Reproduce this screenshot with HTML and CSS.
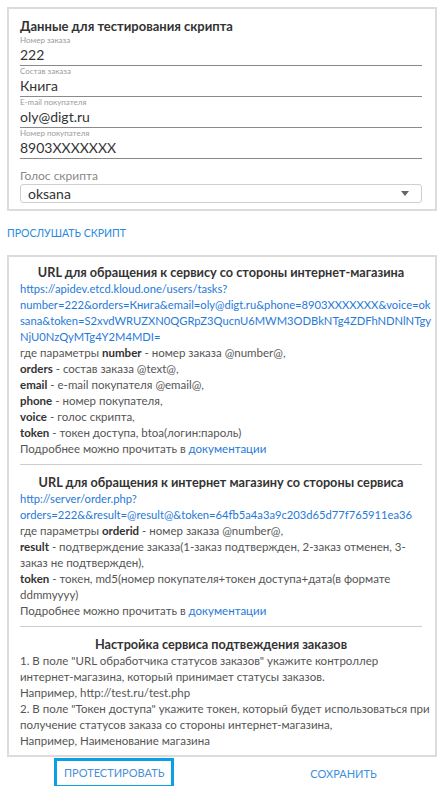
FILE: index.html
```html
<!DOCTYPE html>
<html lang="ru">
<head>
<meta charset="utf-8">
<link rel="stylesheet" href="styles.css">
</head>
<body>
<div class="page">
  <section class="card form-card">
    <h2 class="card-title">Данные для тестирования скрипта</h2>
    <div class="field">
      <label class="field-label">Номер заказа</label>
      <div class="field-value">222</div>
    </div>
    <div class="field">
      <label class="field-label">Состав заказа</label>
      <div class="field-value">Книга</div>
    </div>
    <div class="field">
      <label class="field-label">E-mail покупателя</label>
      <div class="field-value">oly@digt.ru</div>
    </div>
    <div class="field">
      <label class="field-label">Номер покупателя</label>
      <div class="field-value">8903XXXXXXX</div>
    </div>
    <div class="select-field">
      <label class="select-label">Голос скрипта</label>
      <div class="select-box">
        <span>oksana</span>
        <svg class="select-arrow" width="8" height="5" viewBox="0 0 8 5"><path d="M0 0h8L4 5z" fill="#666"/></svg>
      </div>
    </div>
  </section>

  <a class="text-button listen">ПРОСЛУШАТЬ СКРИПТ</a>

  <section class="card info-card">
    <div class="info-block">
      <h3 class="info-title">URL для обращения к сервису со стороны интернет-магазина</h3>
      <a class="link url">https://apidev.etcd.kloud.one/users/tasks?<br>number=222&amp;orders=Книга&amp;email=oly@digt.ru&amp;phone=8903XXXXXXX&amp;voice=ok<br>sana&amp;token=S2xvdWRUZXN0QGRpZ3QucnU6MWM3ODBkNTg4ZDFhNDNlNTgy<br>NjU0NzQyMTg4Y2M4MDI=</a>
      <p>где параметры <b>number</b> - номер заказа @number@,<br>
      <b>orders</b> - состав заказа @text@,<br>
      <b>email</b> - e-mail покупателя @email@,<br>
      <b>phone</b> - номер покупателя,<br>
      <b>voice</b> - голос скрипта,<br>
      <b>token</b> - токен доступа, btoa(логин:пароль)<br>
      Подробнее можно прочитать в <a class="link">документации</a></p>
    </div>
    <div class="info-block">
      <h3 class="info-title">URL для обращения к интернет магазину со стороны сервиса</h3>
      <a class="link url">http://server/order.php?<br>orders=222&amp;&amp;result=@result@&amp;token=64fb5a4a3a9c203d65d77f765911ea36</a>
      <p>где параметры <b>orderid</b> - номер заказа @number@,<br>
      <b>result</b> - подтверждение заказа(1-заказ подтвержден, 2-заказ отменен, 3-<br>заказ не подтвержден),<br>
      <b>token</b> - токен, md5(номер покупателя+токен доступа+дата(в формате<br>ddmmyyyy)<br>
      Подробнее можно прочитать в <a class="link">документации</a></p>
    </div>
    <div class="info-block">
      <h3 class="info-title">Настройка сервиса подтвеждения заказов</h3>
      <p>1. В поле "URL обработчика статусов заказов" укажите контроллер<br>интернет-магазина, который принимает статусы заказов.<br>
      Например, http://test.ru/test.php<br>
      2. В поле "Токен доступа" укажите токен, который будет использоваться при<br>получение статусов заказа со стороны интернет-магазина,<br>
      Например, Наименование магазина</p>
    </div>
  </section>

  <div class="actions">
    <a class="text-button test-btn">ПРОТЕСТИРОВАТЬ</a>
    <a class="text-button save-btn">СОХРАНИТЬ</a>
  </div>
</div>
</body>
</html>
```

FILE: styles.css
```css
* { box-sizing: border-box; }
html, body { margin: 0; padding: 0; background: #fff; }
body {
  font-family: Lato, "Noto Sans", sans-serif;
  color: #444;
  font-size: 11.5px;
}
.page { padding: 7px 10px 0 7px; }
.card { border: 2px solid #dcdcdc; }
.form-card { padding: 8px 13px 6px 11px; }
.card-title {
  margin: 0;
  font-size: 13px;
  font-weight: 700;
  color: #333;
  line-height: 18px;
}
.field { border-bottom: 1px solid #8a8a8a; }
.field-label {
  display: block;
  font-size: 8px;
  line-height: 10px;
  color: #9a9a9a;
}
.field-value {
  font-size: 14px;
  line-height: 20px;
  color: #333;
}
.select-field { margin-top: 9px; }
.select-label { display: block; font-size: 12px; color: #888; line-height: 16px; }
.select-box {
  display: flex;
  align-items: center;
  justify-content: space-between;
  height: 19px;
  border: 1px solid #cfcfcf;
  border-radius: 3px;
  padding: 0 12px 0 7px;
  font-size: 14px;
  color: #333;
}
.text-button {
  color: #2a8ae0;
  font-size: 10.5px;
  text-decoration: none;
}
.listen { display: block; margin: 14px 0 14px; line-height: 16px; }
.info-card { padding: 6px 13px 6px 11px; }
.info-block { padding-bottom: 7px; }
.info-block:last-child { padding-bottom: 0; }
.info-block + .info-block { border-top: 1px solid #cdcdcd; padding-top: 8px; }
.info-title {
  margin: 0;
  text-align: center;
  font-size: 12.7px;
  font-weight: 700;
  color: #333;
  line-height: 18px;
}
.link { color: #1f7ad9; text-decoration: none; }
.url { display: block; line-height: 16px; white-space: nowrap; font-size: 11.2px; }
p { margin: 0; line-height: 16px; color: #555; white-space: nowrap; }
p b { color: #333; }
.actions { display: flex; align-items: center; padding: 1px 0 0 47px; }
.test-btn {
  border: 3px solid #0ba0e6;
  padding: 4px 7px;
  line-height: 16px;
  font-size: 11px;
  color: #4a8fd8;
}
.save-btn { margin-left: 136px; font-size: 11px; color: #3d8fdc; }
```
